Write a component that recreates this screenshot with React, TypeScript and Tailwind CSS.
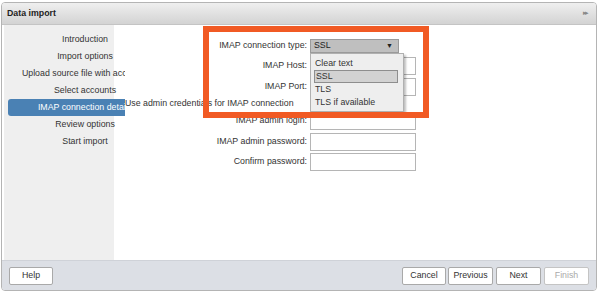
import { useState } from 'react';

const steps = [
  'Introduction',
  'Import options',
  'Upload source file with accounts',
  'Select accounts',
  'IMAP connection details',
  'Review options',
  'Start import',
];

const options = ['Clear text', 'SSL', 'TLS', 'TLS if available'];

const font = { fontFamily: '"Liberation Sans", Arial, sans-serif' };

export default function App() {
  const [current] = useState(4);
  const [security] = useState('SSL');

  return (
    <div className="relative w-[600px] h-[294px] bg-white text-[8.8px] text-[#333]" style={font}>
      <div className="absolute left-[1px] top-[2px] w-[596px] h-[289px] border border-[#b4b4b4] rounded-[4px] overflow-hidden flex flex-col bg-white">
        {/* header */}
        <div className="h-[22px] shrink-0 flex items-center justify-between px-[5px] bg-gradient-to-b from-[#efefef] to-[#d3d3d3] border-b border-[#c4c4c4]">
          <span className="font-bold text-[#222]">Data import</span>
          <span className="text-[7px] text-[#888] tracking-[-2px] mr-[4px]">▸▸</span>
        </div>

        {/* body */}
        <div className="flex flex-1">
          {/* steps */}
          <div className="w-[110px] ml-[2px] bg-[#efefef] shrink-0">
            <div className="relative z-10 ml-[4px] mt-[6px] w-[117px]">
              {steps.map((s, i) => (
                <div
                  key={s}
                  className={`h-[17px] overflow-hidden whitespace-nowrap flex items-center ${
                    i === current ? 'bg-[#4a81b4] text-white rounded-l-[3px]' : ''
                  }`}
                >
                  <div className="w-[154px] shrink-0 text-center">{s}</div>
                </div>
              ))}
            </div>
          </div>

          {/* form */}
          <div className="flex-1 bg-white pt-[12px]">
            <div className="flex items-center h-[18px]">
              <div className="w-[193px] text-right">IMAP connection type:</div>
              <div className="relative ml-[3px]">
                <div className="w-[89px] h-[14px] bg-[#bfbfbf] border border-[#9a9a9a] flex items-center justify-between px-[3px] text-[#222]">
                  <span>{security}</span>
                  <span className="text-[7px] mr-[2px]">▼</span>
                </div>
                <div className="absolute z-20 left-0 top-[14px] w-[94px] h-[59px] bg-[#eeeeee] border border-[#b0b0b0] shadow-[2px_2px_2px_rgba(0,0,0,0.25)] pt-[3px]">
                  {options.map((o) => (
                    <div
                      key={o}
                      className={`ml-[3px] w-[84px] h-[13px] flex items-center px-[1px] ${
                        o === security ? 'bg-[#d2d2d2] border border-[#8e8e8e]' : ''
                      }`}
                    >
                      {o}
                    </div>
                  ))}
                </div>
              </div>
            </div>

            <div className="flex items-center h-[18px] mt-[2px]">
              <div className="w-[193px] text-right">IMAP Host:</div>
              <div className="ml-[3px] w-[106px] h-[18px] border border-[#b5b5b5] bg-white" />
            </div>

            <div className="flex items-center h-[18px] mt-[3px]">
              <div className="w-[193px] text-right">IMAP Port:</div>
              <div className="ml-[3px] w-[106px] h-[18px] border border-[#b5b5b5] bg-white" />
            </div>

            <div className="flex items-center h-[16px]">
              <div className="w-[193px] whitespace-nowrap pl-[11px]">Use admin credentials for IMAP connection</div>
              <div className="ml-[3px] w-[11px] h-[11px] border border-[#999] bg-white" />
            </div>

            <div className="flex items-center h-[18px]">
              <div className="w-[193px] text-right">IMAP admin login:</div>
              <div className="ml-[3px] w-[106px] h-[18px] border border-[#b5b5b5] bg-white" />
            </div>

            <div className="flex items-center h-[18px] mt-[3px]">
              <div className="w-[193px] text-right">IMAP admin password:</div>
              <div className="ml-[3px] w-[106px] h-[18px] border border-[#b5b5b5] bg-white" />
            </div>

            <div className="flex items-center h-[18px] mt-[2px]">
              <div className="w-[193px] text-right">Confirm password:</div>
              <div className="ml-[3px] w-[106px] h-[18px] border border-[#b5b5b5] bg-white" />
            </div>
          </div>
        </div>

        {/* footer */}
        <div className="h-[30px] shrink-0 bg-[#dcdfe5] border-t border-[#cfd2d8] flex items-center justify-between px-[7px]">
          <button className="w-[44px] h-[18px] bg-white border border-[#a9a9a9] rounded-[2px] text-[#333]">Help</button>
          <div className="flex gap-[2px]">
            <button className="w-[44px] h-[18px] bg-white border border-[#a9a9a9] rounded-[2px] text-[#333]">Cancel</button>
            <button className="w-[45px] h-[18px] bg-white border border-[#a9a9a9] rounded-[2px] text-[#333]">Previous</button>
            <button className="w-[45px] h-[18px] bg-white border border-[#a9a9a9] rounded-[2px] text-[#333] ml-[1px]">Next</button>
            <button className="w-[45px] h-[18px] bg-white border border-[#c4c4c4] rounded-[2px] text-[#aaa] ml-[1px]">Finish</button>
          </div>
        </div>
      </div>

      {/* highlight annotation */}
      <div className="absolute left-[203px] top-[26px] w-[226px] h-[92px] border-[6px] border-[#f15a24] z-30 pointer-events-none" />
    </div>
  );
}
